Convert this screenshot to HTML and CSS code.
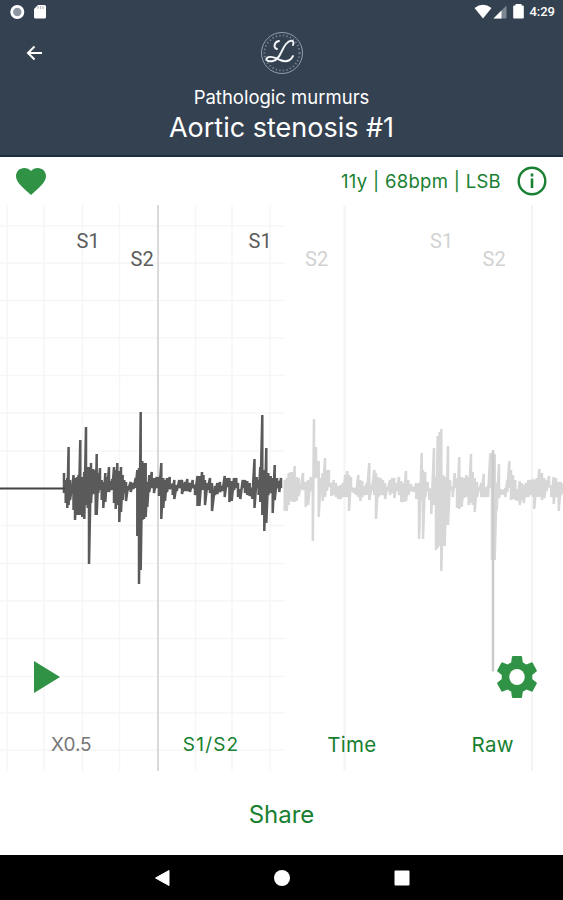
FILE: index.html
```html
<!DOCTYPE html>
<html lang="en">
<head>
    <meta charset="UTF-8">
    <title>Aortic stenosis #1</title>
    <link rel="stylesheet" href="styles.css">
</head>
<body>
<div id="page-container" class="col">
    <header>
        <div class="status-bar row">
            <svg width="48" height="24" viewBox="0 0 48 24">
                <circle cx="17.300" cy="12" r="5.600" fill="#8e96a1" stroke="#fff" stroke-width="2.800"/>
                <path d="M38 5h6.500q1.500 0 1.500 1.500v10.500q0 1.500-1.500 1.500h-9q-1.500 0-1.500-1.500V9z" fill="#fff"/>
                <path d="M38 6v3M40.500 6v3M43 6v3" stroke="#b6bcc4" stroke-width="1.200"/>
            </svg>
            <div class="row">
                <svg class="signal" width="54" height="24" viewBox="471 0 54 24">
                    <path d="M474.500 8q8.500-6.500 17 0L483 18.500z" fill="#fff"/>
                    <path d="M506.500 5.500v13h-13z" fill="#7d8792"/>
                    <path d="M501.500 10.500v8h-8z" fill="#fff"/>
                    <path d="M514 5.500h1.500V4h6v1.500h1.500q.8 0 .8.800v11.400q0 .8-.8.800h-9q-.8 0-.8-.8V6.300q0-.8.800-.8z" fill="#fff"/>
                </svg>
                <span class="clock">4:29</span>
            </div>
        </div>
        <div class="toolbar">
            <svg class="back" width="20" height="20" viewBox="0 0 20 20">
                <path d="M17 10H3.500M9.500 3.500L3 10l6.500 6.500" fill="none" stroke="#fff" stroke-width="2"/>
            </svg>
            <svg class="logo" width="44" height="44" viewBox="0 0 44 44" fill="none">
                <circle cx="22" cy="22" r="20.500" stroke="#929dab" stroke-width="1"/>
                <circle cx="22" cy="22" r="17.500" stroke="#74808f" stroke-width="2" stroke-dasharray="1.300 2.300"/>
                <path d="M17 18c-4-1-3-7 2-8M33 14c2-5-3-6-7-1-5 6-6 16-13 17-5 1-8-1-6-3 3-3 9 0 13 2 5 2 10 2 13-4" stroke="#f4f7fa" stroke-width="1.900" stroke-linecap="round"/>
            </svg>
        </div>
        <div class="category">Pathologic murmurs</div>
        <h1>Aortic stenosis #1</h1>
    </header>

    <div class="info-bar row">
        <svg width="30" height="27" viewBox="2 3 20 18.350" preserveAspectRatio="none">
            <path d="M12 21.350l-1.450-1.320C5.400 15.360 2 12.280 2 8.500 2 5.420 4.420 3 7.500 3c1.740 0 3.410.81 4.500 2.090C13.090 3.810 14.760 3 16.500 3 19.580 3 22 5.420 22 8.500c0 3.780-3.400 6.860-8.550 11.540z" fill="#2f9245"/>
        </svg>
        <div class="row">
            <span class="patient">11y | 68bpm | LSB</span>
            <svg width="30" height="30" viewBox="0 0 30 30">
                <circle cx="15" cy="15" r="13.300" fill="none" stroke="#188030" stroke-width="2.400"/>
                <path d="M15 12.500V22M15 7.500v3" stroke="#188030" stroke-width="2.600"/>
            </svg>
        </div>
    </div>

    <div class="chart">
        <svg class="plot" width="563" height="566" viewBox="0 205 563 566">
            <path class="grid" d="M7 205V771M44 205V771M82.500 205V771M119.500 205V771M195.500 205V771M232 205V771M270 205V771M0 226H285M0 263H285M0 300.500H285M0 338H285M0 375.500H285M0 413H285M0 451H285M0 488H285M0 525.500H285M0 563.500H285M0 601H285M0 638.500H285M0 676.500H285M0 713H285M0 750H285"/>
            <path class="grid-next" d="M344.500 205V771M532 205V771"/>
            <path class="grid-major" d="M158 205V771"/>
            <polyline class="wave next" id="wave-next"/>
            <path class="spike" d="M493 450V671.500"/>
            <polyline class="wave" id="wave-played"/>
            <path class="baseline" d="M0 488.500H65"/>
            <g class="sound">
                <text x="76.500" y="247.500">S1</text>
                <text x="130.500" y="266">S2</text>
                <text x="248.500" y="247.500">S1</text>
            </g>
            <g class="sound next">
                <text x="305" y="266">S2</text>
                <text x="430" y="247.500">S1</text>
                <text x="482.500" y="266">S2</text>
            </g>
        </svg>
        <div class="controls col">
            <div class="actions row">
                <svg width="28" height="34" viewBox="0 0 28 34">
                    <path d="M1 1l26 16L1 33z" fill="#2f9245"/>
                </svg>
                <svg width="40" height="42" viewBox="2.200 2 19.600 20" preserveAspectRatio="none">
                    <path d="M19.430 12.980c.04-.32.070-.64.070-.98s-.03-.66-.07-.98l2.110-1.650c.19-.15.240-.42.120-.64l-2-3.460c-.12-.22-.39-.3-.61-.22l-2.490 1c-.52-.4-1.080-.73-1.690-.98l-.38-2.650C14.460 2.180 14.250 2 14 2h-4c-.25 0-.46.180-.49.420l-.38 2.650c-.61.250-1.170.590-1.690.980l-2.490-1c-.23-.09-.49 0-.61.220l-2 3.460c-.13.220-.07.490.12.640l2.110 1.650c-.04.320-.07.650-.07.980s.03.660.07.980l-2.110 1.650c-.19.150-.24.420-.12.640l2 3.460c.12.220.39.300.61.220l2.490-1c.52.400 1.080.730 1.690.980l.38 2.650c.03.240.24.420.49.420h4c.25 0 .46-.18.490-.42l.38-2.650c.61-.25 1.170-.59 1.690-.98l2.490 1c.23.090.49 0 .61-.22l2-3.460c.12-.22.070-.49-.12-.64z" fill="#2f9245"/>
                    <circle cx="12" cy="12" r="3.800" fill="#fff"/>
                </svg>
            </div>
            <div class="tabs">
                <span class="tab off">X0.5</span>
                <span class="tab sounds">S1/S2</span>
                <span class="tab time">Time</span>
                <span class="tab raw">Raw</span>
            </div>
        </div>
    </div>

    <div class="share">Share</div>

    <nav>
        <svg width="16" height="18" viewBox="0 0 16 18"><path d="M15 1.500v15L1.500 9z" fill="#fff" stroke="#fff" stroke-linejoin="round"/></svg>
        <svg width="16" height="18" viewBox="0 0 16 18"><circle cx="8" cy="9" r="8" fill="#fff"/></svg>
        <svg width="16" height="18" viewBox="0 0 16 18"><rect x=".5" y="1.500" width="15" height="15" rx="1" fill="#fff"/></svg>
    </nav>
</div>
<script src="wave.js"></script>
</body>
</html>
```
FILE: styles.css
```css
body {
    margin: 0;
    background-color: #fff;
    font-family: Inter, "Liberation Sans", sans-serif;
    color: #188030;
}

#page-container {
    width: 563px;
    height: 900px;
    overflow: hidden;
}

.col {
    display: flex;
    flex-flow: column nowrap;
}

.row {
    display: flex;
    flex-flow: row nowrap;
    justify-content: space-between;
    align-items: center;
}

svg {
    display: block;
    flex: none;
}

header {
    box-sizing: border-box;
    height: 157px;
    background-color: #344150;
    border-bottom: 2px solid #1f2d40;
    color: #fff;
    text-align: center;
}

.status-bar {
    height: 24px;
    padding-right: 8px;
}

.signal {
    margin-right: 4px;
}

.clock {
    font-family: Roboto, sans-serif;
    font-size: 13px;
    font-weight: 500;
    line-height: 24px;
}

.toolbar {
    display: grid;
    grid-template-columns: 1fr 44px 1fr;
    align-items: center;
    height: 58px;
}

.back {
    margin-left: 25px;
}

.category {
    height: 28px;
    line-height: 30px;
    font-size: 18.5px;
    letter-spacing: 0;
}

h1 {
    margin: 0;
    line-height: 35px;
    font-size: 27px;
    font-weight: 400;
}

.info-bar {
    height: 48px;
    padding: 0 16px;
}

.patient {
    margin-right: 16px;
    font-size: 18.5px;
    line-height: 24px;
    letter-spacing: 0.3px;
}

.chart {
    position: relative;
    height: 566px;
}

.grid {
    stroke: #f6f6f6;
    stroke-width: 1.5;
}

.grid-next {
    stroke: #f4f4f4;
    stroke-width: 2;
}

.grid-major {
    stroke: #dadada;
    stroke-width: 2;
}

.wave {
    fill: none;
    stroke: #5a5a5a;
    stroke-width: 2.5;
    stroke-linejoin: bevel;
}

.wave.next {
    stroke: #d7d7d7;
}

.spike {
    stroke: #cbcbcb;
    stroke-width: 2.5;
}

.baseline {
    stroke: #444;
    stroke-width: 2;
}

.sound {
    font-family: Roboto, sans-serif;
    font-size: 20px;
    fill: #5c5c5c;
}

.sound.next {
    fill: #d2d2d2;
}

/* buttons lie over the plot */
.controls {
    position: absolute;
    right: 0;
    bottom: 0;
    left: 0;
}

.actions {
    padding: 0 26px 0 33px;
}

.tabs {
    display: grid;
    grid-template-columns: repeat(4, 1fr);
    height: 73px;
    line-height: 94px;
    text-align: center;
}

.tab {
    font-size: 19px;
}

.off {
    padding-left: 2px;
    color: #777;
}

.sounds {
    letter-spacing: 1.2px;
}

.time,
.raw {
    font-size: 20.5px;
    letter-spacing: 0.3px;
}

.share {
    height: 84px;
    line-height: 87px;
    text-align: center;
    font-size: 24px;
}

nav {
    display: flex;
    justify-content: center;
    align-items: center;
    gap: 104px;
    height: 45px;
    background-color: #000;
}
```
FILE: wave.js
```js
// each sample is x, top, bottom
const played = [
  [64, 473, 493], [65.7, 480, 503], [67.3, 478, 508], [68.6, 447, 505], [70, 480, 500], [72, 486, 491],
  [73.5, 475, 510], [75, 478, 520], [77, 477, 515], [78.6, 475, 515], [80.3, 440, 515], [82.3, 477, 517],
  [84.3, 472, 519], [86, 427, 505], [87.7, 467, 508], [89, 467, 564], [91, 463, 503], [93, 469, 494],
  [95.7, 470, 515], [96.7, 454, 515], [98.3, 473, 493], [100, 468, 490], [101.7, 480, 500], [103.3, 482, 508],
  [105.3, 473, 502], [107, 477, 492], [109, 467, 492], [110.7, 481, 490], [112.3, 479, 490], [114, 467, 503],
  [115.7, 470, 509], [117.3, 463, 505], [119.3, 471, 522], [121, 467, 512], [122.7, 475, 500], [124.3, 480, 493],
  [126, 482, 501], [128, 486, 490], [130.7, 482, 492], [133.3, 483, 489], [135.7, 478, 488], [137.3, 470, 536],
  [139, 468, 584], [140.7, 412, 570], [142.3, 461, 520], [144, 463, 519], [145.7, 463, 517], [147.3, 482, 507],
  [149.3, 475, 492], [151.7, 472, 488], [154, 478, 493], [156.7, 477, 488], [159, 477, 496], [161.3, 463, 519],
  [163.3, 478, 508], [165, 480, 501], [167, 478, 492], [169.7, 477, 489], [172.7, 484, 495], [174.3, 480, 499],
  [176.7, 485, 491], [179.3, 480, 488], [182, 480, 494], [185, 482, 491], [187.3, 479, 491], [190, 483, 492],
  [192.7, 480, 488], [195, 485, 495], [197.5, 476, 506], [199.4, 476, 506], [202, 472, 490], [203.5, 475, 490],
  [205, 480, 505], [207.4, 483, 490], [210, 478, 493], [212, 483, 511], [215, 486, 495], [217.3, 483, 494],
  [220, 482, 492], [222.6, 486, 491], [224.7, 476, 497], [227, 478, 487], [229.4, 478, 502], [231.7, 481, 501],
  [234, 478, 490], [236.3, 478, 488], [238, 483, 497], [240.3, 489, 499], [242.7, 480, 488], [245, 480, 493],
  [247.3, 481, 495], [249.7, 483, 496], [252.3, 488, 499], [254.5, 459, 508], [256.7, 477, 488], [258.6, 480, 495],
  [260.3, 467, 502], [262.3, 415, 515], [264.3, 470, 531], [266.3, 448, 523], [268.3, 473, 495], [270.7, 476, 493],
  [272.7, 478, 513], [274.7, 465, 500], [277, 478, 488], [279.3, 481, 492], [281, 478, 488]
];

const next = [
  [284.7, 480, 511], [286.7, 478, 511], [288.7, 473, 505], [290.7, 472, 501], [292.7, 472, 502], [294.7, 466, 502],
  [296.7, 477, 501], [298.7, 478, 496], [300.7, 485, 489], [303, 473, 490], [305.7, 482, 507], [308, 480, 505],
  [310.7, 477, 491], [312.8, 478, 541], [314, 419, 478], [316, 447, 478], [318.7, 461, 517], [320.7, 478, 493],
  [322.7, 473, 501], [325, 458, 497], [327, 470, 491], [329, 470, 487], [331.3, 483, 496], [333.7, 480, 495],
  [336, 483, 497], [338.3, 486, 499], [340.7, 485, 499], [343, 483, 497], [345.3, 475, 497], [347.3, 471, 497],
  [349, 475, 511], [351, 477, 491], [353.7, 488, 493], [356, 488, 495], [358.3, 475, 497], [360.3, 480, 501],
  [362.3, 481, 497], [364.7, 486, 495], [366.7, 483, 495], [369.3, 463, 500], [372, 485, 491], [374.3, 470, 495],
  [376, 473, 519], [378.3, 477, 497], [380.7, 478, 495], [383, 480, 495], [385, 483, 499], [387.3, 487, 491],
  [390, 480, 495], [392.3, 478, 493], [394.3, 478, 498], [396.7, 483, 491], [399, 477, 495], [401.3, 481, 502],
  [403.7, 483, 502], [406, 471, 501], [408.3, 480, 495], [411, 484, 491], [413.7, 487, 492], [416.3, 483, 499],
  [419, 483, 539], [421.7, 453, 500], [423, 470, 539], [425.3, 472, 497], [427.7, 482, 491], [429.3, 488, 500],
  [431.3, 489, 514], [434, 448, 505], [436, 477, 550], [437.7, 436, 548], [439.7, 432, 546], [441.3, 429, 571],
  [443.3, 475, 546], [444.7, 477, 546], [446.3, 480, 525], [448, 446, 525], [450, 480, 490], [452.7, 487, 497],
  [454.7, 473, 488], [457, 478, 508], [459.3, 457, 509], [461.7, 477, 507], [464, 478, 498], [466.3, 475, 497],
  [468.7, 477, 505], [471, 454, 503], [472.7, 472, 505], [474.7, 478, 512], [477, 482, 497], [479.3, 487, 491],
  [481.3, 483, 497], [483.7, 474, 497], [486, 487, 497], [488, 486, 497], [490.3, 453, 488], [492, 453, 560],
  [494.7, 454, 560], [496.7, 483, 510], [499, 464, 498], [501, 489, 494], [503.3, 490, 495], [505.3, 488, 497],
  [507.3, 480, 492], [509.3, 461, 488], [511, 470, 500], [513, 475, 499], [515.3, 480, 500], [517.7, 489, 501],
  [519.7, 481, 505], [522, 483, 500], [523.7, 485, 503], [526, 483, 497], [528.3, 480, 497], [530.7, 480, 495],
  [533, 479, 497], [534.3, 480, 509], [536.7, 478, 497], [539.3, 469, 497], [542, 473, 500], [544.3, 478, 498],
  [546.7, 480, 491], [549, 476, 486], [551.3, 487, 497], [553.7, 477, 504], [556, 478, 497], [558.7, 482, 511],
  [561, 482, 495], [563, 484, 491]
];

function drawWave(id, samples) {
  const points = samples.map(([x, top, bottom]) => `${x},${top} ${x},${bottom}`).join(' ');
  document.querySelector(id).setAttribute('points', points);
}

drawWave('#wave-played', played);
drawWave('#wave-next', next);
```
